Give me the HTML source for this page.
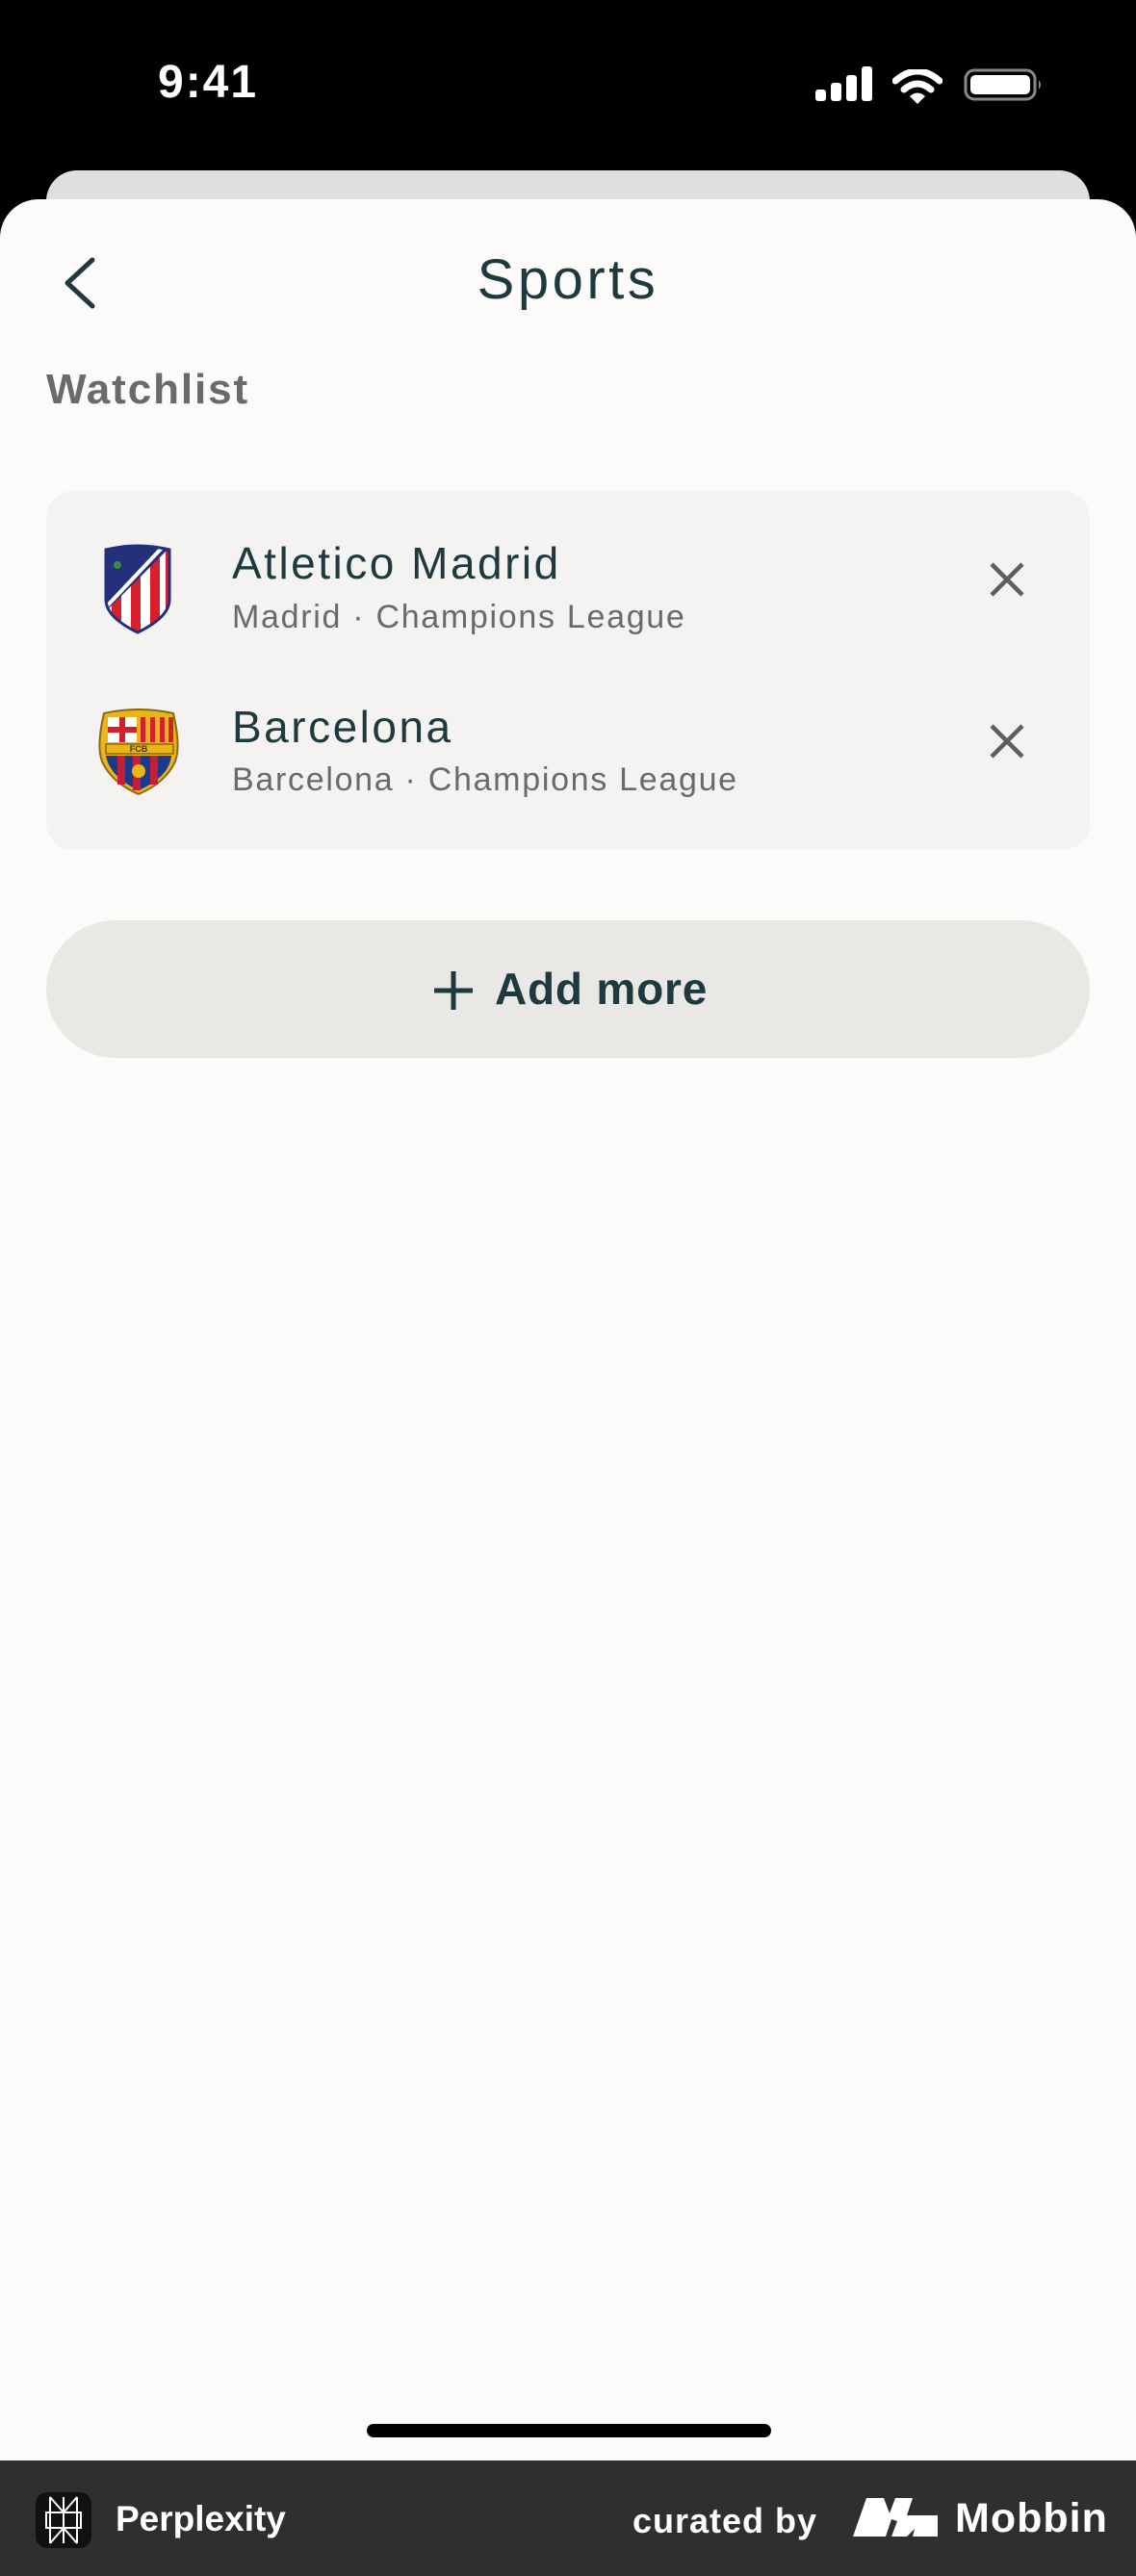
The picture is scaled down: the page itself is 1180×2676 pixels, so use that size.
<!DOCTYPE html>
<html><head><meta charset="utf-8"><style>
*{margin:0;padding:0;box-sizing:border-box}
body{width:1180px;height:2676px;background:#000;font-family:"Liberation Sans",sans-serif;position:relative;overflow:hidden}
.abs{position:absolute}
</style></head><body>
<div class="abs" style="left:164px;top:58px;font-size:48px;font-weight:bold;color:#fff;letter-spacing:2px">9:41</div>
<svg class="abs" style="left:847px;top:69px" width="60" height="38"><rect x="0" y="24" width="11" height="12" rx="3" fill="#fff"/><rect x="16" y="17" width="11" height="19" rx="3" fill="#fff"/><rect x="32" y="9" width="11" height="27" rx="3" fill="#fff"/><rect x="48" y="0" width="11" height="36" rx="3" fill="#fff"/></svg>
<svg class="abs" style="left:927px;top:72px" width="52" height="36" viewBox="0 0 52 36"><path d="M3 12 Q26 -8 49 12" stroke="#fff" stroke-width="7" fill="none" stroke-linecap="round"/><path d="M12 21 Q26 9 40 21" stroke="#fff" stroke-width="7" fill="none" stroke-linecap="round"/><path d="M18 28 L26 36 L34 28 Q26 21 18 28Z" fill="#fff"/></svg>
<svg class="abs" style="left:1001px;top:71px" width="84" height="34"><rect x="2" y="2" width="72" height="30" rx="9" fill="none" stroke="#888" stroke-width="3"/><rect x="7" y="7" width="62" height="20" rx="5" fill="#fff"/><path d="M78 12 Q82 17 78 22Z" fill="#888"/></svg>

<div class="abs" style="left:48px;top:177px;width:1084px;height:80px;background:#e0dfdd;border-radius:32px 32px 0 0"></div>
<div class="abs" style="left:0;top:207px;width:1180px;height:2349px;background:#fcfbf9;border-radius:40px 40px 0 0"></div>

<svg class="abs" style="left:60px;top:266px" width="40" height="56"><path d="M36 4 L10 28 L36 52" stroke="#1e3a3f" stroke-width="5" fill="none" stroke-linecap="round" stroke-linejoin="round"/></svg>
<div class="abs" style="left:0;width:1180px;top:257px;text-align:center;font-size:58px;letter-spacing:3.5px;color:#1e3a3f">Sports</div>
<div class="abs" style="left:48px;top:380px;font-size:44px;letter-spacing:1.9px;color:#6b6a68;font-weight:bold">Watchlist</div>

<div class="abs" style="left:48px;top:510px;width:1084px;height:373px;background:#f4f3f1;border-radius:28px"></div>

<svg class="abs" style="left:106px;top:565px" width="74" height="94" viewBox="0 0 74 94">
<defs><clipPath id="sh"><path d="M4 6 Q37 -2 70 6 L70 58 Q70 76 37 92 Q4 76 4 58Z"/></clipPath></defs>
<g clip-path="url(#sh)"><rect width="74" height="94" fill="#fff"/>
<rect x="10" y="0" width="10" height="94" fill="#d81f2c"/><rect x="30" y="0" width="10" height="94" fill="#d81f2c"/><rect x="50" y="0" width="10" height="94" fill="#d81f2c"/><rect x="66" y="0" width="10" height="94" fill="#d81f2c"/>
<path d="M0 0 L74 0 L0 74Z" fill="#24307a"/><path d="M66 0 L0 70" stroke="#fff" stroke-width="4"/></g>
<path d="M4 6 Q37 -2 70 6 L70 58 Q70 76 37 92 Q4 76 4 58Z" fill="none" stroke="#24307a" stroke-width="3"/>
<circle cx="16" cy="22" r="4" fill="#3a8a4a"/></svg>
<div class="abs" style="left:241px;top:558px;font-size:46px;letter-spacing:2.5px;color:#1e3a3f">Atletico Madrid</div>
<div class="abs" style="left:241px;top:622px;font-size:34px;letter-spacing:1.7px;color:#6b6a68">Madrid · Champions League</div>
<svg class="abs" style="left:1027px;top:583px" width="38" height="38"><path d="M3 3L35 35M35 3L3 35" stroke="#5e5e5e" stroke-width="4.5"/></svg>

<svg class="abs" style="left:100px;top:735px" width="88" height="92" viewBox="0 0 88 92">
<path d="M8 6 Q44 -2 80 6 Q88 40 82 56 Q72 78 44 90 Q16 78 6 56 Q0 40 8 6Z" fill="#e9b518" stroke="#8a6a10" stroke-width="2"/>
<rect x="12" y="10" width="30" height="26" fill="#fff"/><rect x="24" y="10" width="6" height="26" fill="#d4202a"/><rect x="12" y="20" width="30" height="6" fill="#d4202a"/>
<g fill="#d4202a"><rect x="46" y="10" width="5" height="26"/><rect x="56" y="10" width="5" height="26"/><rect x="66" y="10" width="5" height="26"/><rect x="75" y="10" width="5" height="26"/></g>
<rect x="10" y="38" width="70" height="10" fill="#e9b518" stroke="#8a6a10" stroke-width="1.5"/>
<text x="44" y="46" font-size="9" font-weight="bold" text-anchor="middle" fill="#333" font-family="Liberation Sans">FCB</text>
<path d="M10 50 L78 50 Q76 72 44 86 Q14 72 10 50Z" fill="#1c3a8c"/>
<g fill="#c41e3a"><rect x="22" y="50" width="8" height="30"/><rect x="38" y="50" width="8" height="36"/><rect x="56" y="50" width="8" height="30"/></g>
<circle cx="44" cy="66" r="7" fill="#e9b518"/></svg>
<div class="abs" style="left:241px;top:728px;font-size:46px;letter-spacing:2.5px;color:#1e3a3f">Barcelona</div>
<div class="abs" style="left:241px;top:791px;font-size:34px;letter-spacing:1.7px;color:#6b6a68">Barcelona · Champions League</div>
<svg class="abs" style="left:1027px;top:751px" width="38" height="38"><path d="M3 3L35 35M35 3L3 35" stroke="#5e5e5e" stroke-width="4.5"/></svg>

<div class="abs" style="left:48px;top:956px;width:1084px;height:143px;background:#e9e8e5;border-radius:72px"></div>
<svg class="abs" style="left:450px;top:1008px" width="42" height="42"><path d="M21 1V41M1 21H41" stroke="#1e3a3f" stroke-width="5"/></svg>
<div class="abs" style="left:514px;top:1000px;font-size:46px;letter-spacing:0.8px;font-weight:bold;color:#1e3a3f">Add more</div>

<div class="abs" style="left:381px;top:2518px;width:420px;height:14px;background:#000;border-radius:7px"></div>

<div class="abs" style="left:0;top:2556px;width:1180px;height:120px;background:#2f2f2f"></div>
<div class="abs" style="left:37px;top:2589px;width:58px;height:58px;background:#111;border-radius:12px"></div>
<svg class="abs" style="left:44px;top:2592px" width="44" height="52" viewBox="0 0 44 52" fill="none" stroke="#fff" stroke-width="2"><path d="M8 2V50M36 2V50M8 2L22 18L36 2M8 50L22 34L36 50M22 2V50M4 18H40V34H4Z"/></svg>
<div class="abs" style="left:120px;top:2596px;font-size:37px;font-weight:bold;color:#fff">Perplexity</div>
<div class="abs" style="left:657px;top:2598px;font-size:36px;letter-spacing:1px;color:#fff;font-weight:bold">curated by</div>
<svg class="abs" style="left:886px;top:2595px" width="88" height="40" viewBox="0 0 88 40"><path d="M0 40 L14 0 H32 L38 16 L44 0 H62 L56 18 H88 V40 H62 L64 32 L56 40 H40 L46 24 L40 22 L34 40Z" fill="#fff"/></svg>
<div class="abs" style="left:992px;top:2592px;font-size:43px;letter-spacing:1px;font-weight:bold;color:#fff">Mobbin</div>
</body></html>
